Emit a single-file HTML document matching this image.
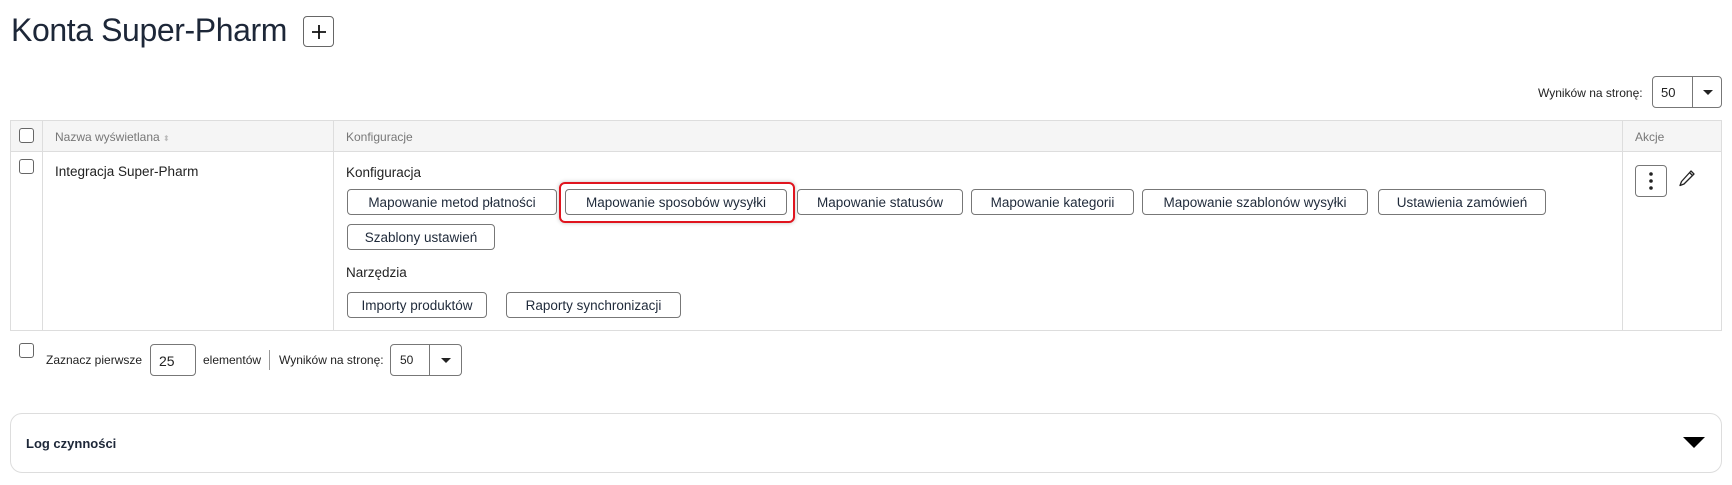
<!DOCTYPE html>
<html><head><meta charset="utf-8"><style>
*{box-sizing:border-box;margin:0;padding:0}
body{width:1732px;height:485px;background:#fff;font-family:"Liberation Sans",sans-serif;color:#222;position:relative;overflow:hidden}
.a{position:absolute}
.btn{position:absolute;height:26px;border:1px solid #777;border-radius:4px;background:#fff;font-size:13.5px;color:#1f2a3a;display:flex;align-items:center;justify-content:center;white-space:nowrap}
.cb{position:absolute;width:15px;height:15px;border:1px solid #666;border-radius:3px;background:#fff}
.hd{font-size:12px;color:#777}
.sm{font-size:12px;line-height:1;white-space:nowrap}
</style></head><body>
<div class="a" style="left:11px;top:12px;font-size:32px;color:#1d2738;letter-spacing:-0.4px">Konta Super-Pharm</div>
<div class="a" style="left:303px;top:16px;width:31px;height:31px;border:1px solid #666;border-radius:4px;display:flex;align-items:center;justify-content:center">
<svg width="16" height="16"><path d="M8 1v14M1 8h14" stroke="#111" stroke-width="1.8"/></svg></div>

<div class="a sm" style="left:1538px;top:87px;color:#222">Wyników na stronę:</div>
<div class="a" style="left:1652px;top:76px;width:70px;height:32px;border:1px solid #777;border-radius:4px"></div>
<div class="a" style="left:1692px;top:76px;width:1px;height:32px;background:#777"></div>
<div class="a" style="left:1661px;top:85px;font-size:13px">50</div>
<svg class="a" style="left:1703px;top:90px" width="10" height="6"><path d="M0 0h10L5 5z" fill="#222"/></svg>

<div class="a" style="left:10px;top:120px;width:1712px;height:211px;border:1px solid #ddd"></div>
<div class="a" style="left:11px;top:121px;width:1710px;height:31px;background:#f5f5f5;border-bottom:1px solid #ddd"></div>
<div class="a" style="left:42px;top:120px;width:1px;height:211px;background:#ddd"></div>
<div class="a" style="left:333px;top:120px;width:1px;height:211px;background:#ddd"></div>
<div class="a" style="left:1622px;top:120px;width:1px;height:211px;background:#ddd"></div>
<div class="cb" style="left:19px;top:128px"></div>
<div class="a hd" style="left:55px;top:130px">Nazwa wyświetlana <span style="font-size:8px;color:#bbb">⬍</span></div>
<div class="a hd" style="left:346px;top:130px">Konfiguracje</div>
<div class="a hd" style="left:1635px;top:130px">Akcje</div>

<div class="cb" style="left:19px;top:159px"></div>
<div class="a" style="left:55px;top:164px;font-size:13.5px">Integracja Super-Pharm</div>
<div class="a" style="left:346px;top:165px;font-size:13.5px">Konfiguracja</div>
<div class="btn" style="left:347px;top:189px;width:210px">Mapowanie metod płatności</div>
<div class="a" style="left:559px;top:182px;width:236px;height:41px;border:2px solid #e0141e;border-radius:6px;box-shadow:0 0 4px rgba(0,0,0,.25)"></div>
<div class="btn" style="left:565px;top:189px;width:222px">Mapowanie sposobów wysyłki</div>
<div class="btn" style="left:797px;top:189px;width:166px">Mapowanie statusów</div>
<div class="btn" style="left:971px;top:189px;width:163px">Mapowanie kategorii</div>
<div class="btn" style="left:1142px;top:189px;width:226px">Mapowanie szablonów wysyłki</div>
<div class="btn" style="left:1378px;top:189px;width:168px">Ustawienia zamówień</div>
<div class="btn" style="left:347px;top:224px;width:148px">Szablony ustawień</div>
<div class="a" style="left:346px;top:265px;font-size:13.5px">Narzędzia</div>
<div class="btn" style="left:347px;top:292px;width:140px">Importy produktów</div>
<div class="btn" style="left:506px;top:292px;width:175px">Raporty synchronizacji</div>

<div class="a" style="left:1635px;top:165px;width:32px;height:32px;border:1px solid #777;border-radius:4px"></div>
<svg class="a" style="left:1648px;top:171px" width="6" height="20"><circle cx="3" cy="3" r="1.8" fill="#222"/><circle cx="3" cy="10" r="1.8" fill="#222"/><circle cx="3" cy="17" r="1.8" fill="#222"/></svg>
<svg class="a" style="left:1678px;top:169px" width="18" height="19"><path d="M13 2l3 3L6 15l-4 1.5L3.5 12.5z M11.5 3.5l3 3" fill="none" stroke="#222" stroke-width="1.3" stroke-linejoin="round"/></svg>

<div class="cb" style="left:19px;top:343px"></div>
<div class="a sm" style="left:46px;top:354px">Zaznacz pierwsze</div>
<div class="a" style="left:150px;top:344px;width:46px;height:32px;border:1px solid #777;border-radius:4px;font-size:14px;padding:8px 0 0 8px">25</div>
<div class="a sm" style="left:203px;top:354px">elementów</div>
<div class="a" style="left:269px;top:350px;width:1px;height:20px;background:#999"></div>
<div class="a sm" style="left:279px;top:354px">Wyników na stronę:</div>
<div class="a" style="left:390px;top:344px;width:72px;height:32px;border:1px solid #777;border-radius:4px"></div>
<div class="a" style="left:429px;top:344px;width:1px;height:32px;background:#777"></div>
<div class="a sm" style="left:400px;top:354px">50</div>
<svg class="a" style="left:441px;top:358px" width="10" height="6"><path d="M0 0h10L5 5z" fill="#222"/></svg>

<div class="a" style="left:10px;top:413px;width:1712px;height:60px;border:1px solid #ddd;border-radius:12px"></div>
<div class="a" style="left:26px;top:436px;font-size:13px;font-weight:bold;color:#1d2738">Log czynności</div>
<svg class="a" style="left:1683px;top:437px" width="22" height="12"><path d="M0 0h22L11 11z" fill="#000"/></svg>
</body></html>
